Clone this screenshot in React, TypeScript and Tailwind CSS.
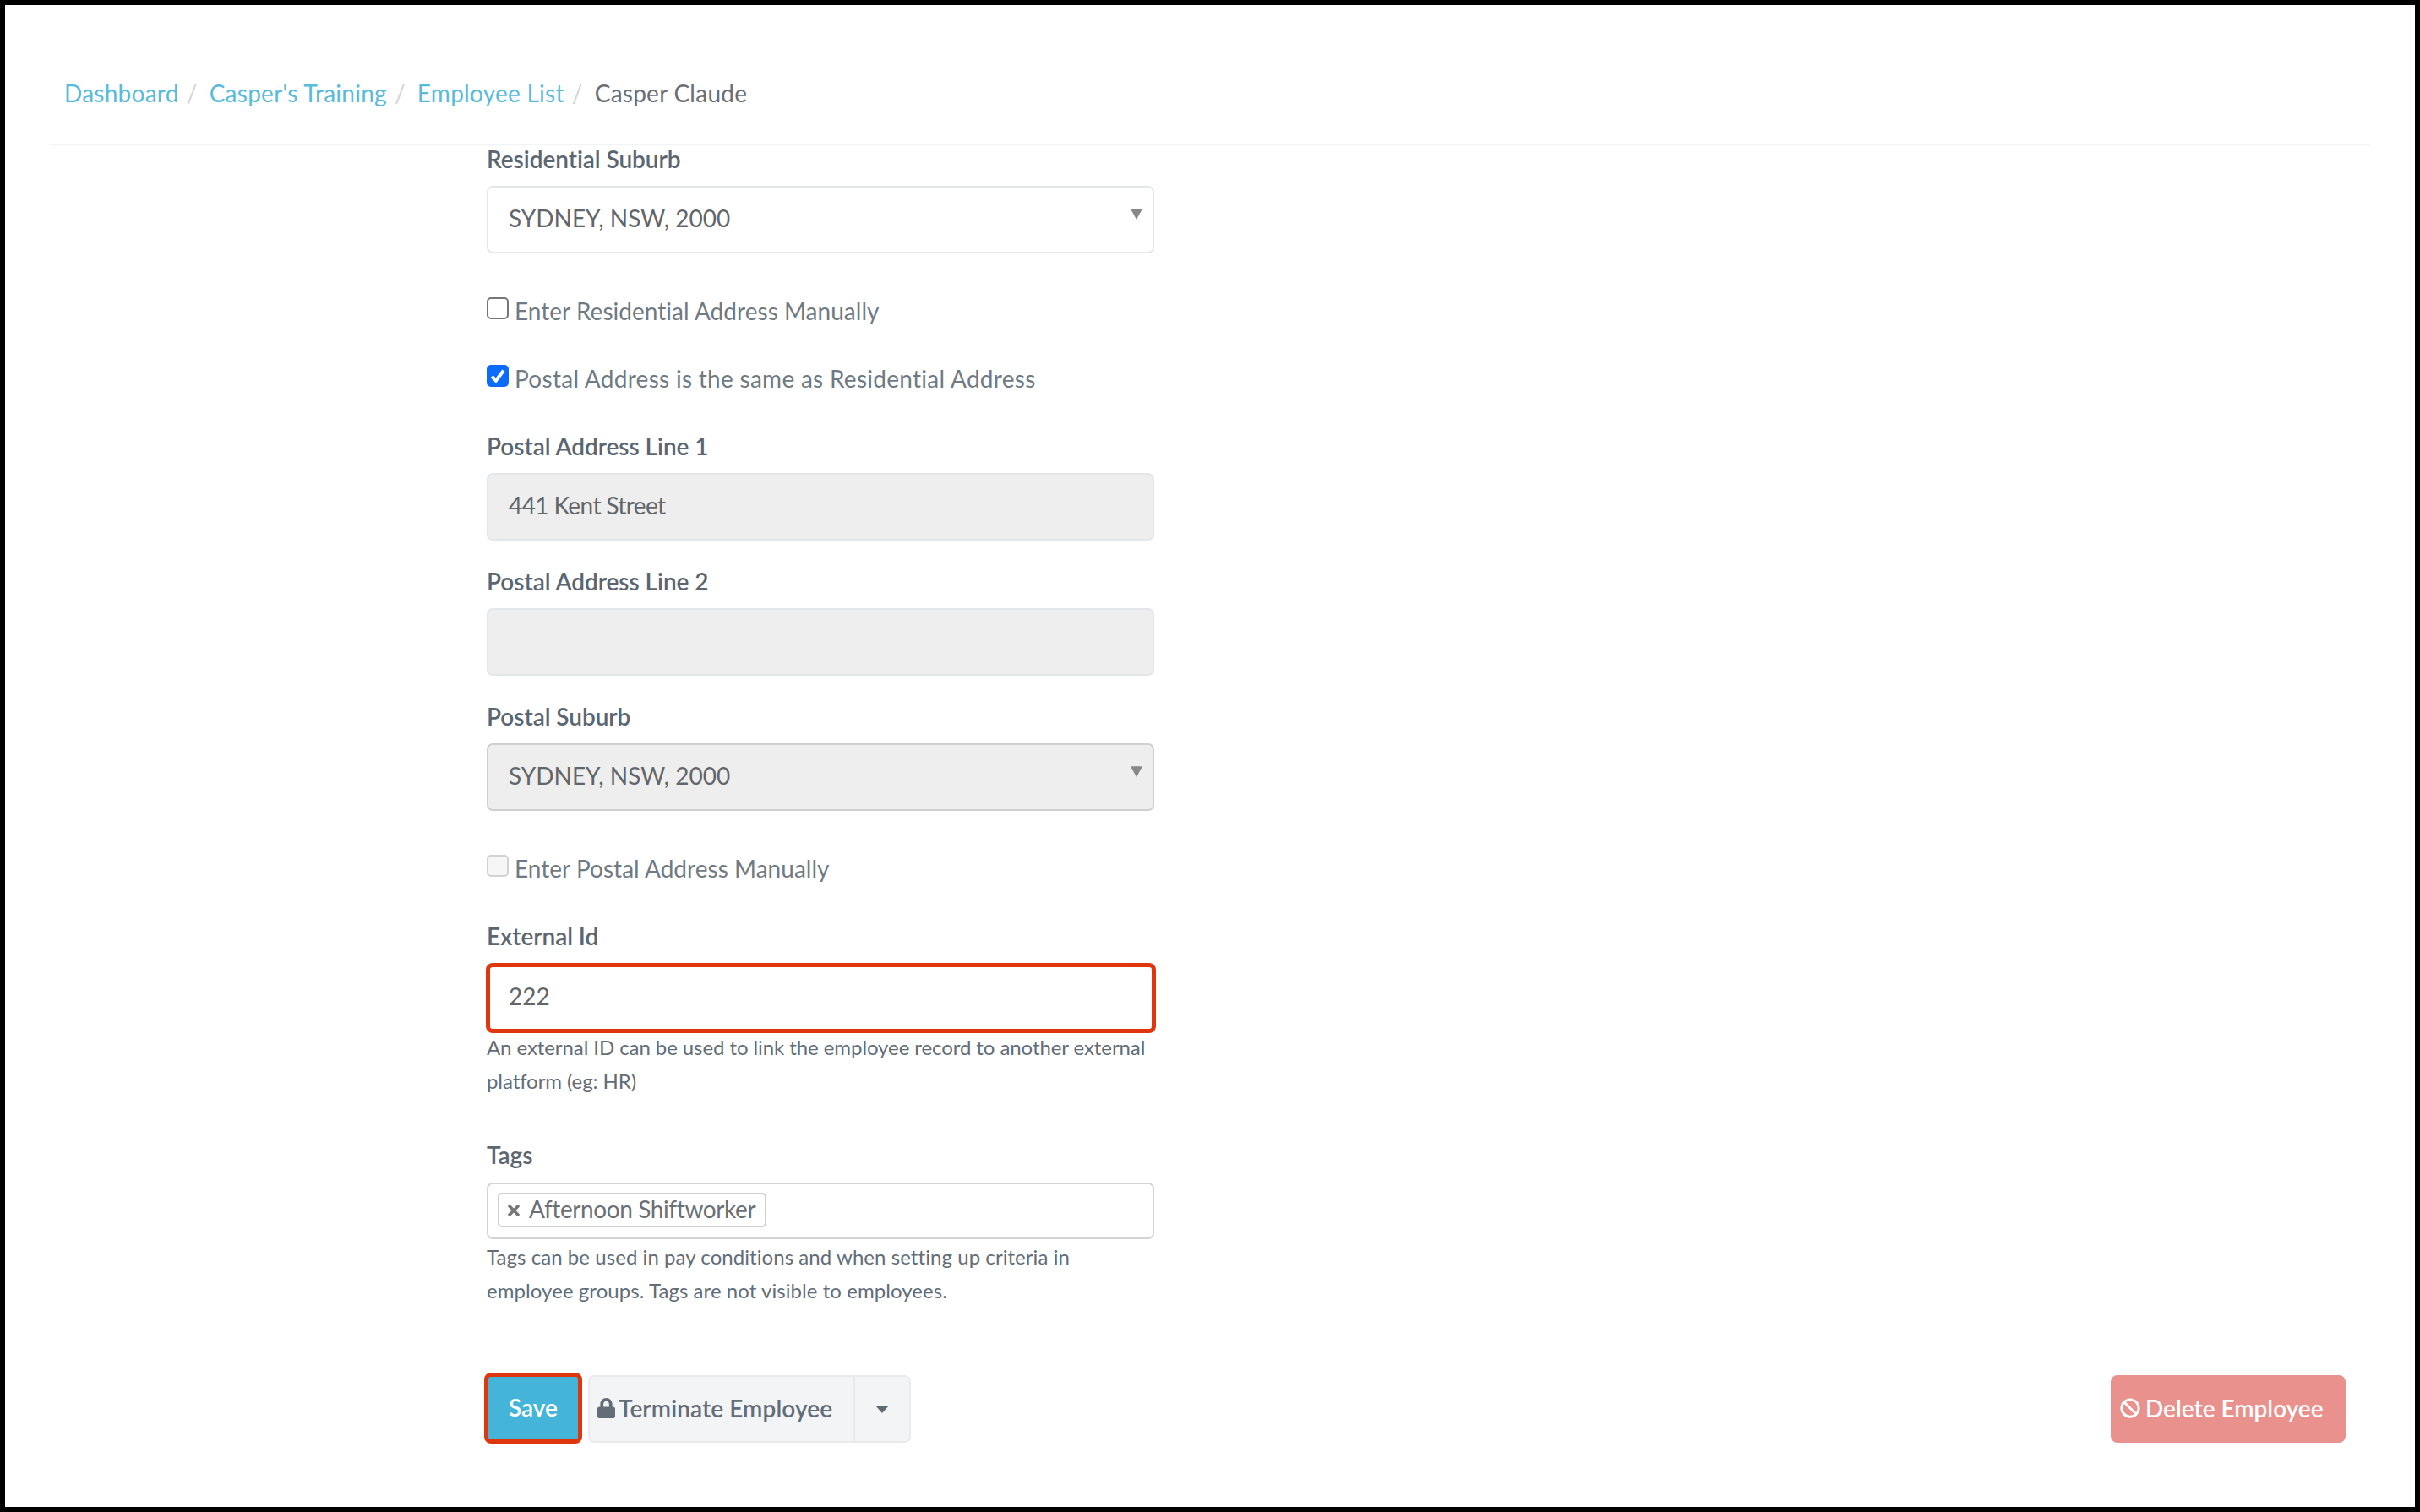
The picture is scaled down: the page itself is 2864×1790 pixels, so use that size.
import { FaLock, FaTimes, FaBan } from "react-icons/fa";

function Label({ children, className = "" }: { children: string; className?: string }) {
  return (
    <div className={`h-[34px] text-[28px] leading-[32px] font-semibold tracking-[-0.05px] text-[#5b6670] ${className}`}>
      {children}
    </div>
  );
}

function Arrow({ className = "" }: { className?: string }) {
  return (
    <svg viewBox="0 0 12 12" className={`absolute right-[12px] top-[24px] h-[14px] w-[14px] ${className}`}>
      <path d="M0 1h12L6 12z" fill="#888" />
    </svg>
  );
}

function Check({ label, checked, disabled, className = "" }: { label: string; checked?: boolean; disabled?: boolean; className?: string }) {
  const box = checked
    ? "bg-[#0b6cfb]"
    : disabled
      ? "border-2 border-[#d2d2d2] bg-[#f6f6f6]"
      : "border-2 border-[#767676] bg-white";
  return (
    <label className={`flex h-[40px] items-start gap-[7px] text-[28px] leading-[39px] text-[#6f7a83] ${className}`}>
      <span className={`mt-[3px] flex h-[26px] w-[26px] shrink-0 items-center justify-center rounded-[5px] ${box}`}>
        {checked && (
          <svg viewBox="0 0 16 16" className="h-[20px] w-[20px]">
            <path d="M2.5 8.5l3.8 4L13.5 3" fill="none" stroke="#fff" strokeWidth="3.2" />
          </svg>
        )}
      </span>
      <span className={checked ? "tracking-[0.28px]" : "tracking-[0.03px]"}>{label}</span>
    </label>
  );
}

const field = "h-[80px] w-[790px] rounded-[7px] border-2 px-[24px] text-[28px] leading-[73px] text-[#62666a]";

export default function App() {
  return (
    <div className="h-[1790px] w-full bg-black p-[6px] font-['Lato','Liberation_Sans',sans-serif]">
      <div className="flex h-full flex-col bg-white">
        <div className="mx-[53px] flex h-[166px] items-start gap-[36px] border-b-2 border-[#f2f3f4] pt-[84px] pl-[17px] text-[28px] leading-[40px] tracking-[0.25px]">
          <span className="relative text-[#58bbdc]">
            Dashboard<span className="absolute right-[-22px] text-[#d4d4d4]">/</span>
          </span>
          <span className="relative text-[#58bbdc]">
            Casper's Training<span className="absolute right-[-22px] text-[#d4d4d4]">/</span>
          </span>
          <span className="relative text-[#58bbdc]">
            Employee List<span className="absolute right-[-22px] text-[#d4d4d4]">/</span>
          </span>
          <span className="text-[#696f74]">Casper Claude</span>
        </div>

        <div className="flex flex-col pr-[82px] pl-[570px]">
          <Label>Residential Suburb</Label>
          <div className={`relative mt-[14px] border-[#e3e7ea] bg-white ${field}`}>
            SYDNEY, NSW, 2000
            <Arrow />
          </div>
          <Check className="mt-[49px]" label="Enter Residential Address Manually" />
          <Check className="mt-[40px]" label="Postal Address is the same as Residential Address" checked />

          <Label className="mt-[43px]">Postal Address Line 1</Label>
          <div className={`mt-[14px] border-[#e3e7ea] bg-[#eeeeee] tracking-[-0.6px] ${field}`}>441 Kent Street</div>
          <Label className="mt-[32px]">Postal Address Line 2</Label>
          <div className={`mt-[14px] border-[#e3e7ea] bg-[#eeeeee] ${field}`} />
          <Label className="mt-[32px]">Postal Suburb</Label>
          <div className={`relative mt-[14px] border-[#cfcfcf] bg-[#eeeeee] ${field}`}>
            SYDNEY, NSW, 2000
            <Arrow />
          </div>
          <Check className="mt-[49px]" label="Enter Postal Address Manually" disabled />

          <Label className="mt-[43px]">External Id</Label>
          <div className="mt-[14px] -ml-[1px] h-[83px] w-[793px] rounded-[8px] border-[5px] border-[#e0360e] px-[22px] text-[28px] leading-[68px] text-[#62666a]">
            222
          </div>
          <div className="-mt-[3px] w-[790px] text-[24px] leading-[40px] tracking-[-0.08px] text-[#626d77]">
            An external ID can be used to link the employee record to another external platform (eg: HR)
          </div>

          <Label className="mt-[51px]">Tags</Label>
          <div className="mt-[15px] flex h-[67px] w-[790px] items-start rounded-[7px] border-2 border-[#d4d4d4] pt-[10px] pl-[11px]">
            <span className="flex h-[41px] w-[318px] items-center gap-[10px] rounded-[5px] border-2 border-[#cfcfcf] pb-[3px] pl-[9px] text-[28px] tracking-[-0.4px] text-[#6a7076]">
              <FaTimes className="mt-[3px] h-[20px] w-[16px] text-[#777]" />
              Afternoon Shiftworker
            </span>
          </div>
          <div className="mt-px w-[790px] text-[24px] leading-[40px] tracking-[0.06px] text-[#626d77]">
            Tags can be used in pay conditions and when setting up criteria in employee groups. Tags are not visible to employees.
          </div>

          <div className="mt-[80px] flex h-[80px] items-start justify-between">
            <div className="flex items-start gap-[7px]">
              <button className="-mt-[3px] -ml-[3px] h-[84px] w-[116px] rounded-[8px] border-[5px] border-[#e0360e] bg-[#45b4d9] pb-[3px] text-[28px] font-semibold text-white">
                Save
              </button>
              <div className="flex h-[80px] w-[382px] rounded-[7px] border-2 border-[#e8eaee] bg-[#f3f4f6] text-[28px] font-semibold text-[#626d77]">
                <span className="flex w-[314px] items-center gap-[4px] border-r-2 border-[#e8eaee] pb-[3px] pl-[9px] tracking-[0.1px]">
                  <FaLock className="h-[24px] w-[21px]" />
                  Terminate Employee
                </span>
                <span className="flex flex-1 items-center justify-center">
                  <svg viewBox="0 0 16 9" className="h-[9px] w-[16px]">
                    <path d="M0 0h16L8 9z" fill="#5f6a74" />
                  </svg>
                </span>
              </div>
            </div>
            <button className="flex h-[80px] w-[278px] items-center gap-[6px] rounded-[8px] bg-[#e9918d] pb-[3px] pl-[11px] text-[28px] font-semibold text-white">
              <FaBan className="h-[24px] w-[24px]" />
              Delete Employee
            </button>
          </div>
        </div>
      </div>
    </div>
  );
}
